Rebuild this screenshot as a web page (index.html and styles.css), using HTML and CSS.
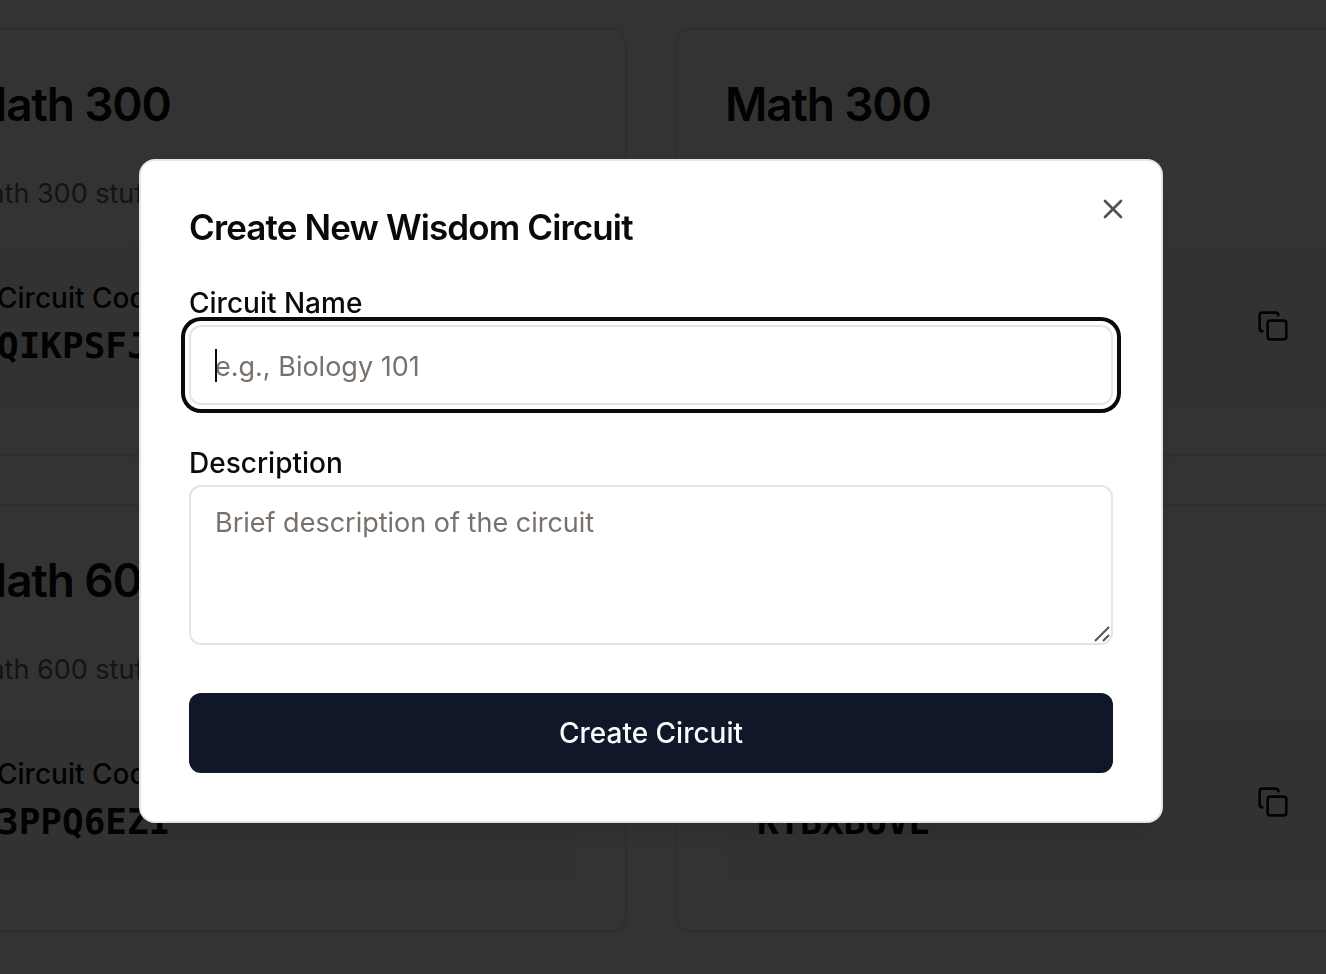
FILE: index.html
```
<!DOCTYPE html>
<html lang="en">
<head>
<meta charset="utf-8">
<meta name="viewport" content="width=device-width, initial-scale=1">
<title>Create New Wisdom Circuit</title>
<link rel="stylesheet" href="styles.css">
</head>
<body>
<svg class="sprite" aria-hidden="true">
  <symbol id="copy" viewBox="0 0 24 24">
    <rect x="8" y="8" width="14" height="14" rx="2" ry="2"/>
    <path d="M4 16c-1.1 0-2-.9-2-2V4c0-1.1.9-2 2-2h10c1.1 0 2 .9 2 2"/>
  </symbol>
  <symbol id="close" viewBox="0 0 24 24">
    <path d="M18 6 6 18"/><path d="m6 6 12 12"/>
  </symbol>
</svg>
<main class="page">
  <div class="circuits">
    <article class="card">
      <h2 class="card-title">Math 300</h2>
      <p class="card-text">Math 300 stuff</p>
      <div class="code-box">
        <div><p class="code-label">Circuit Code:</p><p class="code">QIKPSFJ</p></div>
        <button class="copy-button" type="button" aria-label="Copy code"><svg class="icon"><use href="#copy"/></svg></button>
      </div>
    </article>
    <article class="card">
      <h2 class="card-title">Math 300</h2>
      <p class="card-text">Math 300</p>
      <div class="code-box">
        <div><p class="code-label">Circuit Code:</p></div>
        <button class="copy-button" type="button" aria-label="Copy code"><svg class="icon"><use href="#copy"/></svg></button>
      </div>
    </article>
    <article class="card">
      <h2 class="card-title">Math 600</h2>
      <p class="card-text">Math 600 stuff</p>
      <div class="code-box">
        <div><p class="code-label">Circuit Code:</p><p class="code">3PPQ6EZI</p></div>
        <button class="copy-button" type="button" aria-label="Copy code"><svg class="icon"><use href="#copy"/></svg></button>
      </div>
    </article>
    <article class="card">
      <h2 class="card-title">Math</h2>
      <p class="card-text">Math</p>
      <div class="code-box">
        <div><p class="code-label">Circuit Code:</p><p class="code">KTBXBUVE</p></div>
        <button class="copy-button" type="button" aria-label="Copy code"><svg class="icon"><use href="#copy"/></svg></button>
      </div>
    </article>
  </div>
</main>
<div class="overlay">
  <section class="dialog" role="dialog" aria-modal="true" aria-labelledby="dialog-title">
    <h1 class="dialog-title" id="dialog-title">Create New Wisdom Circuit</h1>
    <form class="form">
      <div class="field">
        <label class="label" for="name">Circuit Name</label>
        <div class="control">
          <input class="input" id="name" type="text" placeholder="e.g., Biology 101" autofocus>
          <span class="caret" aria-hidden="true"></span>
        </div>
      </div>
      <div class="field">
        <label class="label" for="description">Description</label>
        <div class="control">
          <textarea class="input textarea" id="description" placeholder="Brief description of the circuit"></textarea>
          <svg class="grip" viewBox="0 0 16 16" aria-hidden="true"><path d="M1 15 15 1M9 15l6-6"/></svg>
        </div>
      </div>
      <button class="submit" type="submit">Create Circuit</button>
    </form>
    <button class="close-button" type="button" aria-label="Close"><svg class="icon"><use href="#close"/></svg></button>
  </section>
</div>
</body>
</html>
```
FILE: styles.css
```
* { box-sizing: border-box; }

body {
  margin: 0;
  background: #fff;
  color: #0c0a09;
  font-family: Inter, "Liberation Sans", sans-serif;
  font-size: 28px;
  line-height: 40px;
}

h1, h2, p { margin: 0; }
button, input, textarea { font: inherit; color: inherit; }

.sprite { display: none; }

.icon {
  display: block;
  width: 32px;
  height: 32px;
  fill: none;
  stroke: currentColor;
  stroke-width: 2;
  stroke-linecap: round;
  stroke-linejoin: round;
}

.page {
  height: 100vh;
  overflow: hidden;
}

.circuits {
  display: grid;
  grid-template-columns: 1fr 1fr;
  gap: 48px;
  margin: 28px -61px 0 -85px;
}

.card {
  padding: 48px;
  border: 2px solid #e5e7eb;
  border-radius: 16px;
  box-shadow: 0 2px 4px rgba(0, 0, 0, 0.05);
}

.card-title {
  font-size: 46px;
  font-weight: 600;
  line-height: 52px;
  letter-spacing: -0.025em;
}

.card-text {
  margin: 44px 0 32px;
  color: #5f6472;
  font-size: 27px;
}

.code-box {
  display: flex;
  align-items: center;
  justify-content: space-between;
  min-height: 160px;
  padding: 32px;
  border-radius: 16px;
  background: #fafaf9;
}

.code-label { font-weight: 500; }

.code {
  font-family: "DejaVu Sans Mono", monospace;
  font-size: 36px;
  font-weight: 700;
  line-height: 56px;
}

.copy-button {
  padding: 16px;
  border: 0;
  background: none;
}

.overlay {
  position: fixed;
  inset: 0;
  display: flex;
  align-items: center;
  justify-content: center;
  padding: 8px 24px 0 0;
  background: rgba(0, 0, 0, 0.8);
}

.dialog {
  position: relative;
  display: grid;
  gap: 32px;
  width: 100%;
  max-width: 1024px;
  padding: 48px;
  border: 2px solid #e5e5e5;
  border-radius: 16px;
  background: #fff;
  box-shadow: 0 20px 30px -6px rgba(0, 0, 0, 0.1), 0 8px 12px -8px rgba(0, 0, 0, 0.1);
}

.dialog-title {
  font-size: 35px;
  font-weight: 600;
  line-height: 36px;
  letter-spacing: -0.025em;
}

.form {
  display: grid;
  gap: 32px;
}

.label {
  display: block;
  padding: 6px 0 2px;
  font-weight: 500;
}

.control {
  position: relative;
  display: flex;
}

.input {
  width: 100%;
  height: 80px;
  padding: 18px 24px 16px;
  border: 2px solid #e5e5e5;
  border-radius: 12px;
  outline: none;
  background: #fff;
  font-size: 27px;
  caret-color: transparent;
}

.input::placeholder {
  color: #78716c;
  opacity: 1;
}

.input:focus { box-shadow: 0 0 0 4px #fff, 0 0 0 8px #0c0a09; }

.textarea {
  height: 160px;
  padding-top: 16px;
  resize: none;
}

.caret {
  position: absolute;
  top: 24px;
  left: 26px;
  width: 2px;
  height: 33px;
  background: #0c0a09;
}

.grip {
  position: absolute;
  right: 3px;
  bottom: 3px;
  width: 16px;
  height: 16px;
  fill: none;
  stroke: #555;
  stroke-width: 2;
}

.submit {
  height: 80px;
  margin-top: 16px;
  border: 0;
  border-radius: 12px;
  background: #101728;
  color: #f8fafc;
  font-weight: 500;
}

.close-button {
  position: absolute;
  top: 32px;
  right: 32px;
  padding: 0;
  border: 0;
  background: none;
  opacity: 0.7;
}
```
